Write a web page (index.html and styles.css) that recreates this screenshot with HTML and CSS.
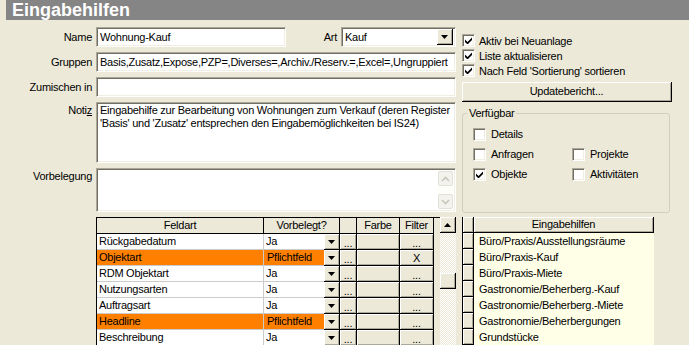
FILE: index.html
```html
<!DOCTYPE html>
<html lang="de">
<head>
  <meta charset="UTF-8" />
  <title>Eingabehilfen</title>
  <link rel="stylesheet" href="styles.css">
</head>
<body>
  <div class="titlebar">Eingabehilfen</div>

  <div class="content">
    <div class="left">
      <label class="lbl">Name</label>
      <div class="name-row">
        <div class="sunken field name-field">Wohnung-Kauf</div>
        <label class="art-lbl">Art</label>
        <div class="sunken field select">
          <span class="select-text">Kauf</span>
          <span class="raised dd-btn"><svg width="7" height="4" viewBox="0 0 7 4"><polygon points="0,0 7,0 3.5,4" /></svg></span>
        </div>
      </div>

      <label class="lbl">Gruppen</label>
      <div class="sunken field">Basis,Zusatz,Expose,PZP=,Diverses=,Archiv./Reserv.=,Excel=,Ungruppiert</div>

      <label class="lbl">Zumischen in</label>
      <div class="sunken field"></div>

      <label class="lbl top">Noti<u>z</u></label>
      <div class="sunken memo">Eingabehilfe zur Bearbeitung von Wohnungen zum Verkauf (deren Register<br>'Basis' und 'Zusatz' entsprechen den Eingabemöglichkeiten bei IS24)</div>

      <label class="lbl top">Vorbelegung</label>
      <div class="sunken memo memo-scroll">
        <div class="memo-text"></div>
        <div class="xp-scroll">
          <span class="xp-btn"><svg width="9" height="6" viewBox="0 0 9 6"><polyline points="1,5 4.5,1.5 8,5" /></svg></span>
          <span class="xp-track"></span>
          <span class="xp-btn"><svg width="9" height="6" viewBox="0 0 9 6"><polyline points="1,1 4.5,4.5 8,1" /></svg></span>
        </div>
      </div>

      <div class="lbl"></div>
      <div class="grid-wrap">
        <div class="fields">
          <div class="hd">Feldart</div>
          <div class="hd span2">Vorbelegt?</div>
          <div class="hd"></div>
          <div class="hd">Farbe</div>
          <div class="hd">Filter</div>
          <div class="hd-empty"></div>

          <div class="c-name">Rückgabedatum</div>
          <div class="c-val">Ja</div>
          <div class="raised c-dd"><svg width="7" height="4" viewBox="0 0 7 4"><polygon points="0,0 7,0 3.5,4" /></svg></div>
          <div class="raised c-dots">...</div>
          <div class="raised c-btn"></div>
          <div class="raised c-dots">...</div>
          <div class="c-empty"></div>

          <div class="c-name must">Objektart</div>
          <div class="c-val must">Pflichtfeld</div>
          <div class="raised c-dd"><svg width="7" height="4" viewBox="0 0 7 4"><polygon points="0,0 7,0 3.5,4" /></svg></div>
          <div class="raised c-dots">...</div>
          <div class="raised c-btn"></div>
          <div class="raised c-x">X</div>
          <div class="c-empty"></div>

          <div class="c-name">RDM Objektart</div>
          <div class="c-val">Ja</div>
          <div class="raised c-dd"><svg width="7" height="4" viewBox="0 0 7 4"><polygon points="0,0 7,0 3.5,4" /></svg></div>
          <div class="raised c-dots">...</div>
          <div class="raised c-btn"></div>
          <div class="raised c-dots">...</div>
          <div class="c-empty"></div>

          <div class="c-name">Nutzungsarten</div>
          <div class="c-val">Ja</div>
          <div class="raised c-dd"><svg width="7" height="4" viewBox="0 0 7 4"><polygon points="0,0 7,0 3.5,4" /></svg></div>
          <div class="raised c-dots">...</div>
          <div class="raised c-btn"></div>
          <div class="raised c-dots">...</div>
          <div class="c-empty"></div>

          <div class="c-name">Auftragsart</div>
          <div class="c-val">Ja</div>
          <div class="raised c-dd"><svg width="7" height="4" viewBox="0 0 7 4"><polygon points="0,0 7,0 3.5,4" /></svg></div>
          <div class="raised c-dots">...</div>
          <div class="raised c-btn"></div>
          <div class="raised c-dots">...</div>
          <div class="c-empty"></div>

          <div class="c-name must">Headline</div>
          <div class="c-val must">Pflichtfeld</div>
          <div class="raised c-dd"><svg width="7" height="4" viewBox="0 0 7 4"><polygon points="0,0 7,0 3.5,4" /></svg></div>
          <div class="raised c-dots">...</div>
          <div class="raised c-btn"></div>
          <div class="raised c-dots">...</div>
          <div class="c-empty"></div>

          <div class="c-name">Beschreibung</div>
          <div class="c-val">Ja</div>
          <div class="raised c-dd"><svg width="7" height="4" viewBox="0 0 7 4"><polygon points="0,0 7,0 3.5,4" /></svg></div>
          <div class="raised c-dots">...</div>
          <div class="raised c-btn"></div>
          <div class="raised c-dots">...</div>
          <div class="c-empty"></div>
        </div>

        <div class="vscroll">
          <div class="raised sb-btn"><svg width="7" height="4" viewBox="0 0 7 4"><polygon points="0,4 7,4 3.5,0" /></svg></div>
          <div class="sb-track">
            <div class="raised sb-thumb"></div>
          </div>
        </div>
      </div>
    </div>

    <div class="right">
      <div class="checks">
        <label class="cb"><span class="box"><svg width="7" height="7" viewBox="0 0 7 7"><polygon points="0,2.5 2.5,5 7,0.5 7,3 2.5,7.5 0,5" /></svg></span>Aktiv bei Neuanlage</label>
        <label class="cb"><span class="box"><svg width="7" height="7" viewBox="0 0 7 7"><polygon points="0,2.5 2.5,5 7,0.5 7,3 2.5,7.5 0,5" /></svg></span>Liste aktualisieren</label>
        <label class="cb"><span class="box"><svg width="7" height="7" viewBox="0 0 7 7"><polygon points="0,2.5 2.5,5 7,0.5 7,3 2.5,7.5 0,5" /></svg></span>Nach Feld 'Sortierung' sortieren</label>
      </div>

      <div class="raised update-btn">Updatebericht...</div>

      <fieldset class="group">
        <legend>Verfügbar</legend>
        <div class="group-grid">
          <label class="cb"><span class="box"></span>Details</label>
          <span></span>
          <label class="cb"><span class="box"></span>Anfragen</label>
          <label class="cb"><span class="box"></span>Projekte</label>
          <label class="cb"><span class="box"><svg width="7" height="7" viewBox="0 0 7 7"><polygon points="0,2.5 2.5,5 7,0.5 7,3 2.5,7.5 0,5" /></svg></span>Objekte</label>
          <label class="cb"><span class="box"></span>Aktivitäten</label>
        </div>
      </fieldset>

      <div class="list">
        <div class="raised rh"></div><div class="raised list-hd">Eingabehilfen</div>
        <div class="raised rh"></div><div class="li">Büro/Praxis/Ausstellungsräume</div>
        <div class="raised rh"></div><div class="li">Büro/Praxis-Kauf</div>
        <div class="raised rh"></div><div class="li">Büro/Praxis-Miete</div>
        <div class="raised rh"></div><div class="li">Gastronomie/Beherberg.-Kauf</div>
        <div class="raised rh"></div><div class="li">Gastronomie/Beherberg.-Miete</div>
        <div class="raised rh"></div><div class="li">Gastronomie/Beherbergungen</div>
        <div class="raised rh"></div><div class="li">Grundstücke</div>
      </div>
    </div>
  </div>
</body>
</html>
```

FILE: styles.css
```css
html, body {
  margin: 0;
  padding: 0;
  width: 100%;
  height: 100%;
  overflow: hidden;
  background: #ECE9D8;
  font-family: "Liberation Sans", Arial, sans-serif;
  font-size: 11px;
  letter-spacing: -0.25px;
  color: #000;
}

.titlebar {
  margin-left: 6px;
  height: 20px;
  padding-left: 6px;
  background: #858585;
  color: #fff;
  font-weight: bold;
  font-size: 18px;
  line-height: 20px;
  letter-spacing: 0;
}

.content {
  display: flex;
  gap: 6px;
  padding-top: 7px;
}

/* 3D Rahmen */
.sunken {
  box-sizing: border-box;
  background: #fff;
  border-top: 1px solid #ACA899;
  border-left: 1px solid #ACA899;
  border-right: 1px solid #fff;
  border-bottom: 1px solid #fff;
  box-shadow: inset 1px 1px #716F64, inset -1px -1px #F1EFE2;
}

.raised {
  box-sizing: border-box;
  background: #ECE9D8;
  border-right: 1px solid #000;
  border-bottom: 1px solid #000;
  box-shadow: inset 1px 1px #fff, inset -1px -1px #ACA899;
}

/* linke Spalte */
.left {
  width: 456px;
  display: grid;
  grid-template-columns: 96px 360px;
  grid-template-rows: 20px 20px 20px 61px 44px auto;
  row-gap: 5px;
}

.lbl {
  text-align: right;
  padding-right: 4px;
  line-height: 20px;
  white-space: nowrap;
}

.lbl.top {
  line-height: 14px;
  padding-top: 1px;
}

.field {
  padding: 0 3px;
  line-height: 18px;
  white-space: nowrap;
  overflow: hidden;
}

.name-row {
  display: flex;
}

.name-field {
  width: 190px;
}

.art-lbl {
  flex: 1;
  text-align: right;
  padding-right: 4px;
  line-height: 20px;
}

.select {
  width: 115px;
  display: flex;
  align-items: center;
  padding: 0 2px 0 3px;
}

.select-text {
  flex: 1;
}

.dd-btn {
  width: 16px;
  height: 16px;
  display: flex;
  align-items: center;
  justify-content: center;
}

.memo {
  padding: 1px 3px;
  line-height: 13px;
  white-space: nowrap;
  overflow: hidden;
}

.memo-scroll {
  display: flex;
  padding: 2px 2px 2px 3px;
}

.memo-text {
  flex: 1;
}

.xp-scroll {
  width: 15px;
  display: flex;
  flex-direction: column;
  background: #FDFDFA;
}

.xp-btn {
  box-sizing: border-box;
  height: 15px;
  border: 1px solid #E2E1DA;
  border-radius: 2px;
  background: #F3F2EC;
  display: flex;
  align-items: center;
  justify-content: center;
}

.xp-btn polyline {
  fill: none;
  stroke: #C9C7BA;
  stroke-width: 1.6;
}

.xp-track {
  flex: 1;
}

/* Feldtabelle */
.grid-wrap {
  display: flex;
  height: 130px;
  overflow: hidden;
}

.fields {
  flex: 1;
  display: grid;
  grid-template-columns: 167px 60px 16px 17px 43px 34px 1fr;
  grid-auto-rows: 16px;
  border-top: 1px solid #000;
  border-left: 1px solid #000;
  align-content: start;
}

.hd {
  box-sizing: border-box;
  text-align: center;
  line-height: 15px;
  border-right: 1px solid #000;
  border-bottom: 1px solid #000;
}

.span2 {
  grid-column: span 2;
}

.c-name,
.c-val {
  box-sizing: border-box;
  background: #fff;
  padding-left: 2px;
  line-height: 15px;
  border-bottom: 1px solid #CBCBCB;
  white-space: nowrap;
}

.c-name {
  border-right: 1px solid #CBCBCB;
}

.c-val.must {
  padding-left: 3px;
}

.must {
  background: #FF8000;
}

.c-dd {
  display: flex;
  align-items: center;
  justify-content: center;
}

.c-dots,
.c-x {
  text-align: center;
  line-height: 16px;
}

.c-dots {
  line-height: 19px;
}

.vscroll {
  width: 16px;
  display: flex;
  flex-direction: column;
}

.sb-btn {
  height: 16px;
  display: flex;
  align-items: center;
  justify-content: center;
}

.sb-track {
  flex: 1;
  background: repeating-conic-gradient(#fff 0 25%, #ECE9D8 0 50%) 0 0 / 2px 2px;
}

.sb-thumb {
  height: 16px;
  margin-top: 40px;
}

/* rechte Spalte */
.right {
  flex: 1;
}

.checks {
  padding-top: 6px;
}

.cb {
  display: flex;
  align-items: center;
  height: 15px;
  white-space: nowrap;
}

.box {
  box-sizing: border-box;
  width: 13px;
  height: 13px;
  margin-right: 5px;
  background: #fff;
  border-top: 1px solid #ACA899;
  border-left: 1px solid #ACA899;
  border-right: 1px solid #fff;
  border-bottom: 1px solid #fff;
  box-shadow: inset 1px 1px #716F64, inset -1px -1px #F1EFE2;
  display: flex;
  align-items: center;
  justify-content: center;
}

.checks .box {
  margin-right: 4px;
}

.update-btn {
  width: 210px;
  height: 20px;
  margin-top: 4px;
  text-align: center;
  line-height: 19px;
}

.group {
  box-sizing: border-box;
  width: 208px;
  height: 107px;
  min-width: 0;
  margin: 4px 0 0 0;
  padding: 4px 0 0 4px;
  border: 1px solid #D0D0BF;
  border-radius: 3px;
}

.group legend {
  padding: 0 2px;
  line-height: 14px;
}

.group-grid {
  display: grid;
  grid-template-columns: 99px auto;
  grid-auto-rows: 20px;
  padding-left: 6px;
}

.group-grid .cb {
  height: 20px;
}

.list {
  display: grid;
  grid-template-columns: 12px 180px;
  grid-auto-rows: 16px;
  margin-top: 4px;
}

.rh {
  border-left: 1px solid #000;
}

.list-hd {
  text-align: center;
  line-height: 15px;
}

.li {
  background: #FFFFE8;
  padding-left: 5px;
  line-height: 16px;
  white-space: nowrap;
}
```
